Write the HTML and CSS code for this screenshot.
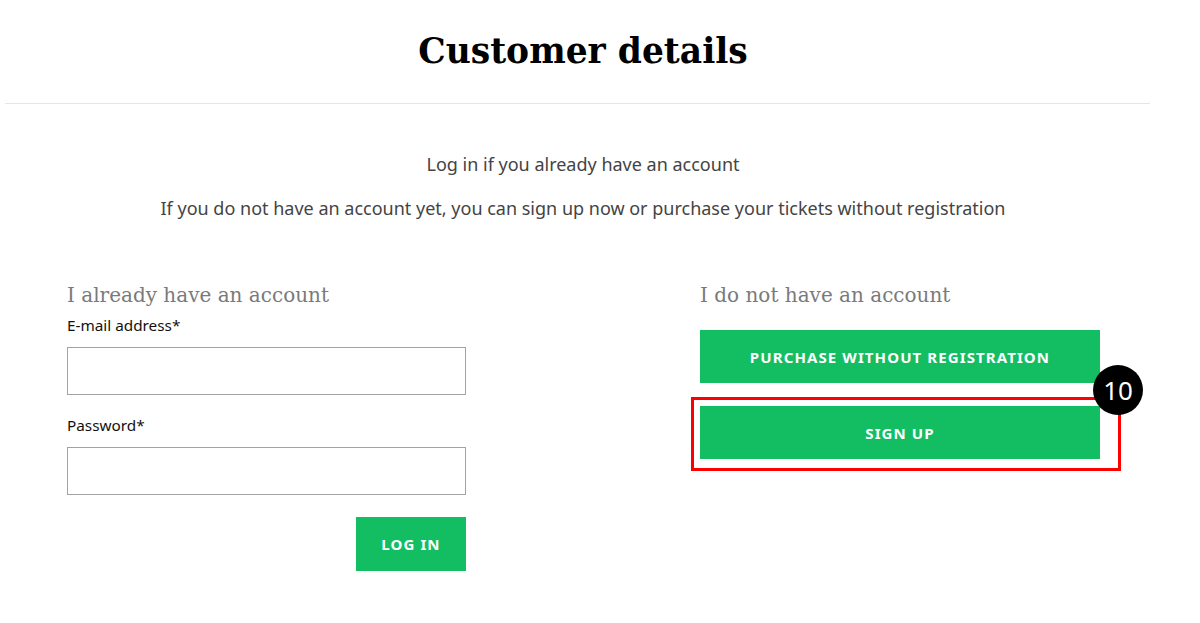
FILE: index.html
```html
<!DOCTYPE html>
<html lang="en">
<head>
<meta charset="utf-8">
<title>Customer details</title>
<link rel="stylesheet" href="styles.css">
</head>
<body>
<div class="page">
  <h1 class="title">Customer details</h1>
  <hr class="rule">
  <div class="intro">
    <p>Log in if you already have an account</p>
    <p>If you do not have an account yet, you can sign up now or purchase your tickets without registration</p>
  </div>
  <div class="columns">
    <section class="col">
      <h2 class="col-title">I already have an account</h2>
      <label class="label">E-mail address*</label>
      <div class="input"></div>
      <label class="label">Password*</label>
      <div class="input"></div>
      <div class="actions">
        <span class="btn btn-login">LOG IN</span>
      </div>
    </section>
    <section class="col">
      <h2 class="col-title">I do not have an account</h2>
      <span class="btn btn-wide btn-first">PURCHASE WITHOUT REGISTRATION</span>
      <div class="highlight-wrap">
        <span class="btn btn-wide">SIGN UP</span>
        <div class="highlight"></div>
        <div class="badge">10</div>
      </div>
    </section>
  </div>
</div>
</body>
</html>
```
FILE: styles.css
```css
html, body {
  margin: 0;
  padding: 0;
  background: #fff;
}
body {
  font-family: "Noto Sans", "Open Sans", sans-serif;
  color: #333;
}
.page {
  width: 1166px;
}
.title {
  margin: 0;
  padding-top: 26px;
  height: 53px;
  text-align: center;
  font-family: "DejaVu Serif", "Liberation Serif", serif;
  font-weight: bold;
  font-size: 34.5px;
  line-height: 50px;
  color: #000;
}
.rule {
  margin: 24px 16px 0 5px;
  border: 0;
  border-top: 1px solid #e6e6e6;
  height: 0;
}
.intro {
  text-align: center;
  padding-top: 48px;
  color: #444;
  font-size: 18px;
}
.intro p {
  margin: 0 0 19px;
  line-height: 25px;
}
.columns {
  display: grid;
  grid-template-columns: 399px 400px;
  justify-content: space-between;
  padding: 41px 66px 0 67px;
}
.col {
  display: flex;
  flex-direction: column;
}
.col-title {
  margin: 0;
  font-family: "DejaVu Serif", "Liberation Serif", serif;
  font-weight: normal;
  font-size: 20px;
  line-height: 28px;
  color: #7a7a7a;
}
.label {
  display: block;
  font-size: 15.3px;
  line-height: 22px;
  margin-top: 5px;
  color: #111;
}
.input {
  height: 46px;
  border: 1px solid #a3a3a3;
  margin-top: 11px;
  margin-bottom: 14px;
  background: #fff;
}
.actions {
  display: flex;
  justify-content: flex-end;
  margin-top: 8px;
}
.btn {
  display: flex;
  align-items: center;
  justify-content: center;
  background: #13be63;
  color: #fff;
  font-weight: bold;
  font-size: 15px;
  letter-spacing: 1.1px;
  height: 53px;
}
.btn-login {
  width: 110px;
  height: 54px;
}
.btn-wide {
  width: 400px;
}
.btn-first {
  margin-top: 21px;
}
.highlight-wrap {
  position: relative;
  margin-top: 23px;
}
.highlight {
  position: absolute;
  left: -9px;
  top: -9px;
  right: -21px;
  bottom: -12px;
  border: 3px solid #ff0000;
}
.badge {
  position: absolute;
  right: -43px;
  top: -41px;
  width: 50px;
  height: 50px;
  border-radius: 50%;
  background: #000;
  color: #fff;
  font-size: 26px;
  display: flex;
  align-items: center;
  justify-content: center;
  letter-spacing: 0;
}
```
